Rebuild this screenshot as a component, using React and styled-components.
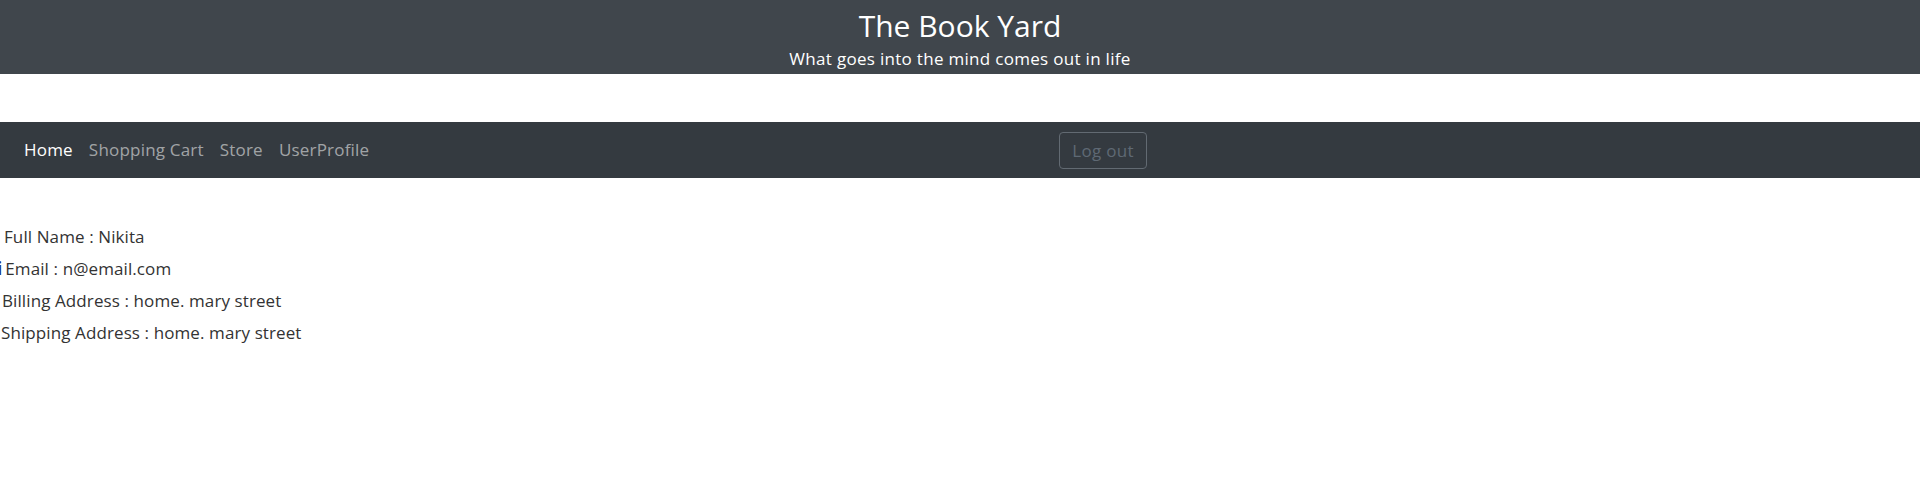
import React from 'react';
import styled, { createGlobalStyle } from 'styled-components';

const GlobalStyle = createGlobalStyle`
  body {
    margin: 0;
    background: #fff;
    font-family: "Open Sans", "Liberation Sans", sans-serif;
    color: #333;
  }
`;

const Header = styled.header`
  height: 74px;
  background: #40464c;
  color: #fff;
  text-align: center;
  padding-top: 7px;
  box-sizing: border-box;
`;

const Title = styled.h1`
  margin: 0;
  font-size: 30px;
  font-weight: 500;
  line-height: 38px;
`;

const Tagline = styled.p`
  margin: 2px 0 0;
  font-size: 17px;
  letter-spacing: 0.3px;
  line-height: 24px;
`;

const Navbar = styled.nav`
  margin-top: 48px;
  height: 56px;
  background: #343a40;
  display: flex;
  align-items: center;
  padding: 0 16px;
`;

const NavList = styled.ul`
  display: flex;
  list-style: none;
  margin: 0;
  padding: 0;
`;

const NavLink = styled.a`
  display: block;
  padding: 8px;
  font-size: 17px;
  letter-spacing: 0.2px;
  line-height: 24px;
  text-decoration: none;
  color: ${({ active }) => (active ? '#fff' : 'rgba(255,255,255,0.55)')};
`;

const LogoutButton = styled.button`
  margin-left: 682px;
  height: 37px;
  padding: 0 12px;
  background: transparent;
  border: 1px solid #626a72;
  border-radius: 4px;
  color: #5f6974;
  font-family: inherit;
  font-size: 17px;
  letter-spacing: 0.3px;
`;

const Profile = styled.ul`
  list-style: none;
  margin: 0;
  padding: 43px 0 0;
`;

const Row = styled.li`
  font-size: 17px;
  letter-spacing: 0.1px;
  line-height: 32px;
  white-space: nowrap;
  padding-left: ${({ indent }) => indent}px;
`;

const Mark = styled.span`
  color: #1b2a78;
  font-weight: 700;
  margin-left: -3px;
  margin-right: 3px;
`;

const rows = [
  { label: 'Full Name', value: 'Nikita', indent: 4 },
  { label: 'Email', value: 'n@email.com', indent: 0, mark: true },
  { label: 'Billing Address', value: 'home. mary street', indent: 2 },
  { label: 'Shipping Address', value: 'home. mary street', indent: 1 },
];

const App = () => (
  <>
    <GlobalStyle />
    <Header>
      <Title>The Book Yard</Title>
      <Tagline>What goes into the mind comes out in life</Tagline>
    </Header>
    <Navbar>
      <NavList>
        <li><NavLink active href="#">Home</NavLink></li>
        <li><NavLink href="#">Shopping Cart</NavLink></li>
        <li><NavLink href="#">Store</NavLink></li>
        <li><NavLink href="#">UserProfile</NavLink></li>
      </NavList>
      <LogoutButton>Log out</LogoutButton>
    </Navbar>
    <Profile>
      {rows.map(r => (
        <Row key={r.label} indent={r.indent}>
          {r.mark && <Mark>i</Mark>}
          {r.label} : {r.value}
        </Row>
      ))}
    </Profile>
  </>
);

export default App;
